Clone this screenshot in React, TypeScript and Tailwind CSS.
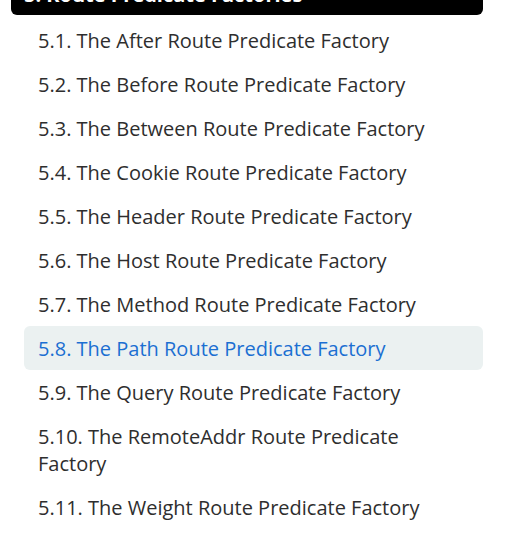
const items = [
  "5.1. The After Route Predicate Factory",
  "5.2. The Before Route Predicate Factory",
  "5.3. The Between Route Predicate Factory",
  "5.4. The Cookie Route Predicate Factory",
  "5.5. The Header Route Predicate Factory",
  "5.6. The Host Route Predicate Factory",
  "5.7. The Method Route Predicate Factory",
  "5.8. The Path Route Predicate Factory",
  "5.9. The Query Route Predicate Factory",
  "5.10. The RemoteAddr Route Predicate Factory",
  "5.11. The Weight Route Predicate Factory",
];

const active = "5.8. The Path Route Predicate Factory";

export default function App() {
  return (
    <div
      className="w-[514px] h-[539px] overflow-hidden bg-white px-[11px]"
      style={{ fontFamily: '"Open Sans", sans-serif' }}
    >
      <div className="w-[472px] mt-[-29px] rounded-b-[6px] bg-black px-[13px] pt-[9.5px] pb-[7.5px] text-[20px] leading-[27px] font-bold text-white">
        5. Route Predicate Factories
      </div>
      <ul className="ml-[13px] mt-[3px] w-[459px]">
        {items.map((name) => (
          <li
            key={name}
            className={
              name === active
                ? "rounded-[6px] bg-[#ebf1f1] pl-[14px] pr-[30px] py-[8.5px] text-[20px] leading-[27px] text-[#1b6fd2]"
                : "pl-[14px] pr-[30px] py-[8.5px] text-[20px] leading-[27px] text-[#2e2e2e]"
            }
          >
            {name}
          </li>
        ))}
      </ul>
    </div>
  );
}
